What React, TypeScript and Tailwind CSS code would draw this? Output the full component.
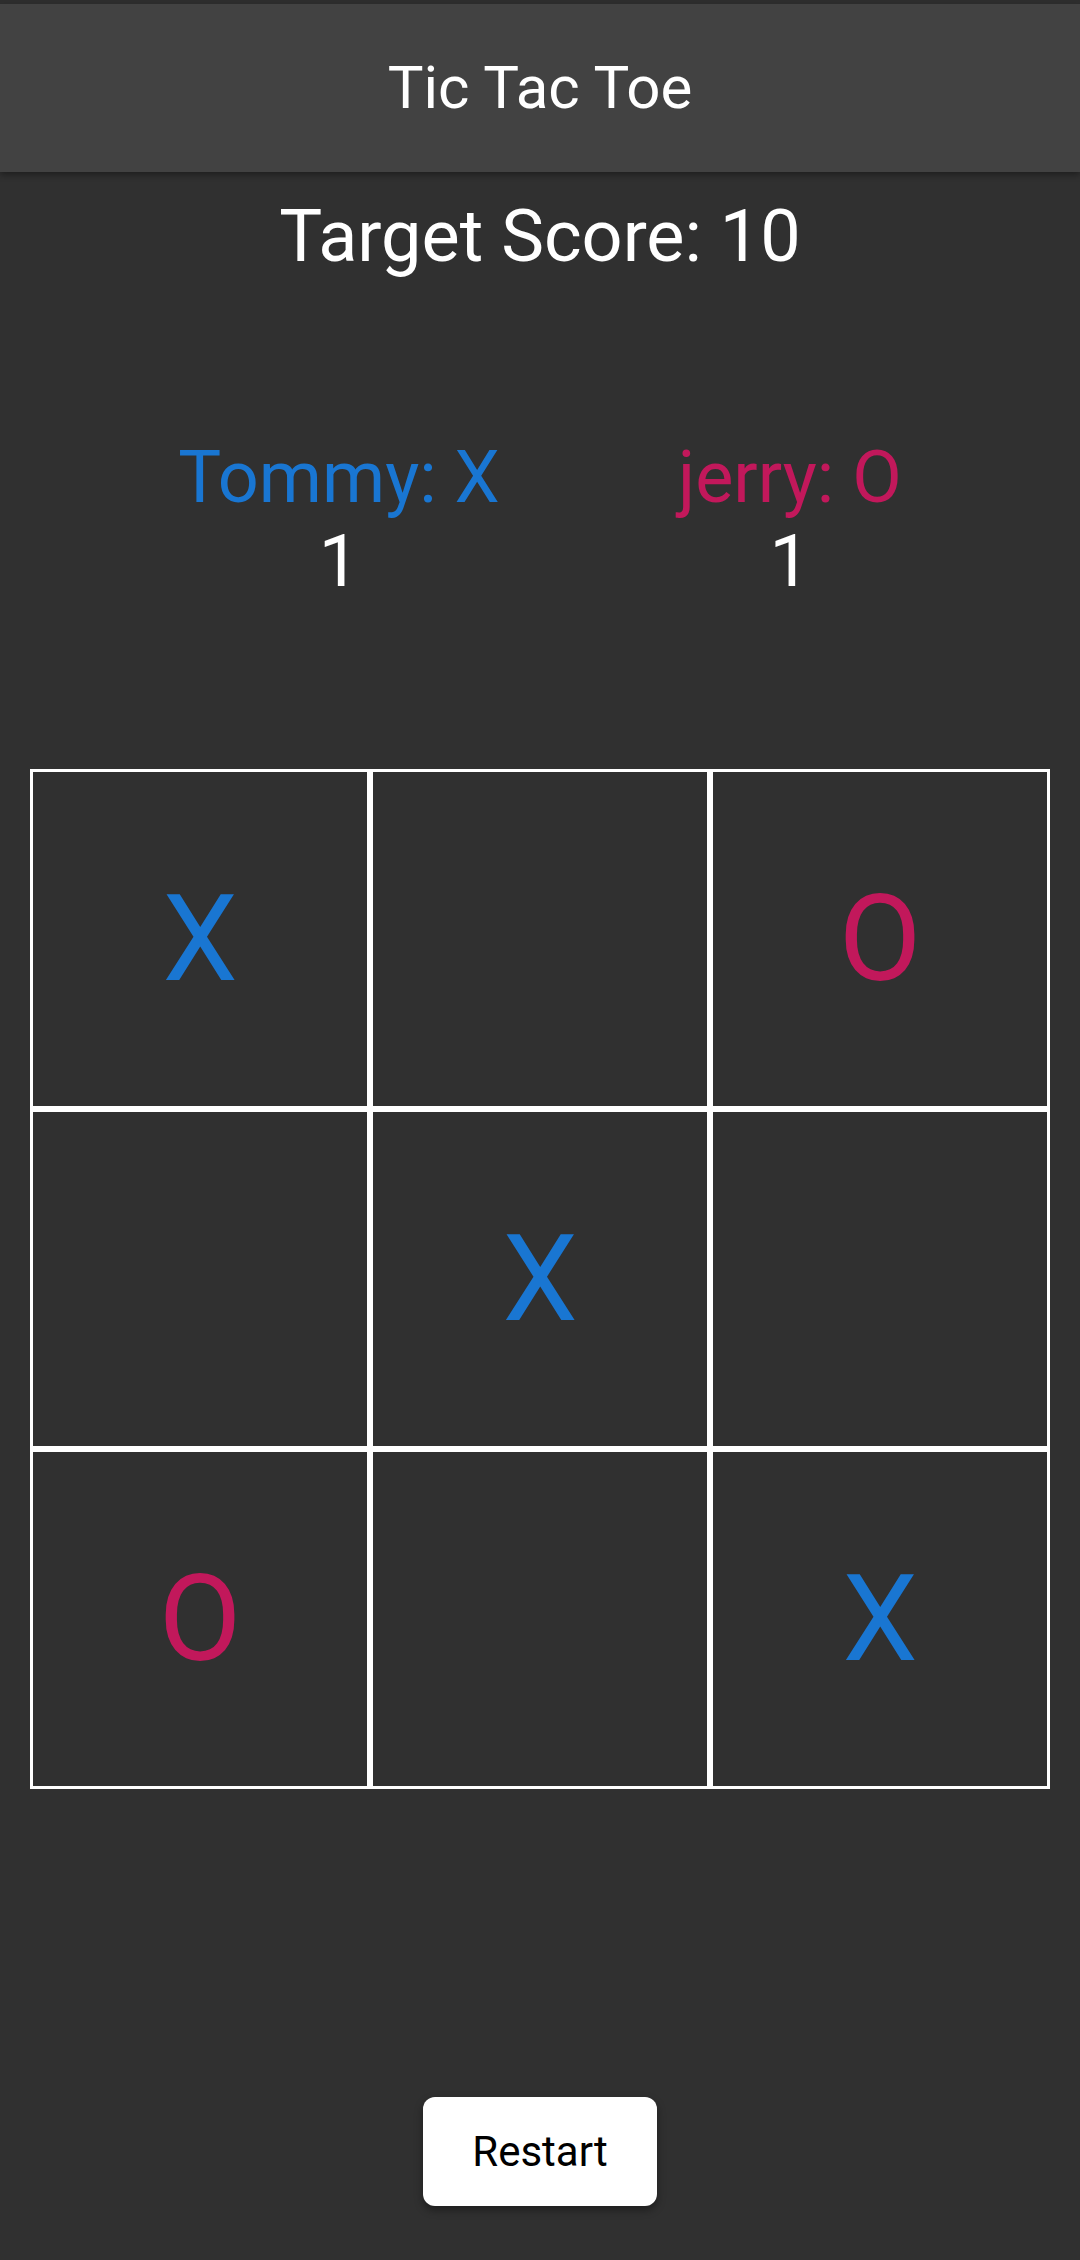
import React from "react";

type Mark = "X" | "O" | "";

const board: Mark[] = ["X", "", "O", "", "X", "", "O", "", "X"];

function Cell({ mark }: { mark: Mark }) {
  return (
    <div className="w-[340px] h-[340px] border-[3px] border-white flex items-center justify-center">
      {mark === "X" && (
        <span className="text-[120px] leading-none text-[#1976D2]">X</span>
      )}
      {mark === "O" && (
        <span className="text-[120px] leading-none text-[#C2185B]">O</span>
      )}
    </div>
  );
}

export default function App() {
  return (
    <div
      className="w-[1080px] h-[2260px] bg-[#303030] flex flex-col items-center"
      style={{ fontFamily: "Roboto, 'Noto Sans', sans-serif" }}
    >
      <div className="w-full h-[4px] bg-[#2e2e2e]" />
      <header className="w-full h-[168px] bg-[#424242] flex items-center justify-center shadow-[0_3px_6px_rgba(0,0,0,0.35)] relative z-10">
        <h1 className="text-[60px] text-white leading-none">Tic Tac Toe</h1>
      </header>

      <div className="mt-[23px] text-[72px] leading-[84px] text-white">Target Score: 10</div>

      <div className="mt-[157px] w-full flex justify-evenly">
        <div className="flex flex-col items-center">
          <div className="text-[72px] leading-[84px] text-[#1976D2]">Tommy: X</div>
          <div className="text-[72px] leading-[84px] text-white">1</div>
        </div>
        <div className="flex flex-col items-center">
          <div className="text-[72px] leading-[84px] text-[#C2185B]">jerry: O</div>
          <div className="text-[72px] leading-[84px] text-white">1</div>
        </div>
      </div>

      <div className="mt-[165px] grid grid-cols-3 w-[1020px]">
        {board.map((m, i) => (
          <Cell key={i} mark={m} />
        ))}
      </div>

      <button className="mt-[308px] w-[234px] h-[109px] bg-white rounded-[12px] text-black text-[42px] shadow-[0_4px_8px_rgba(0,0,0,0.4)]">
        Restart
      </button>
    </div>
  );
}
